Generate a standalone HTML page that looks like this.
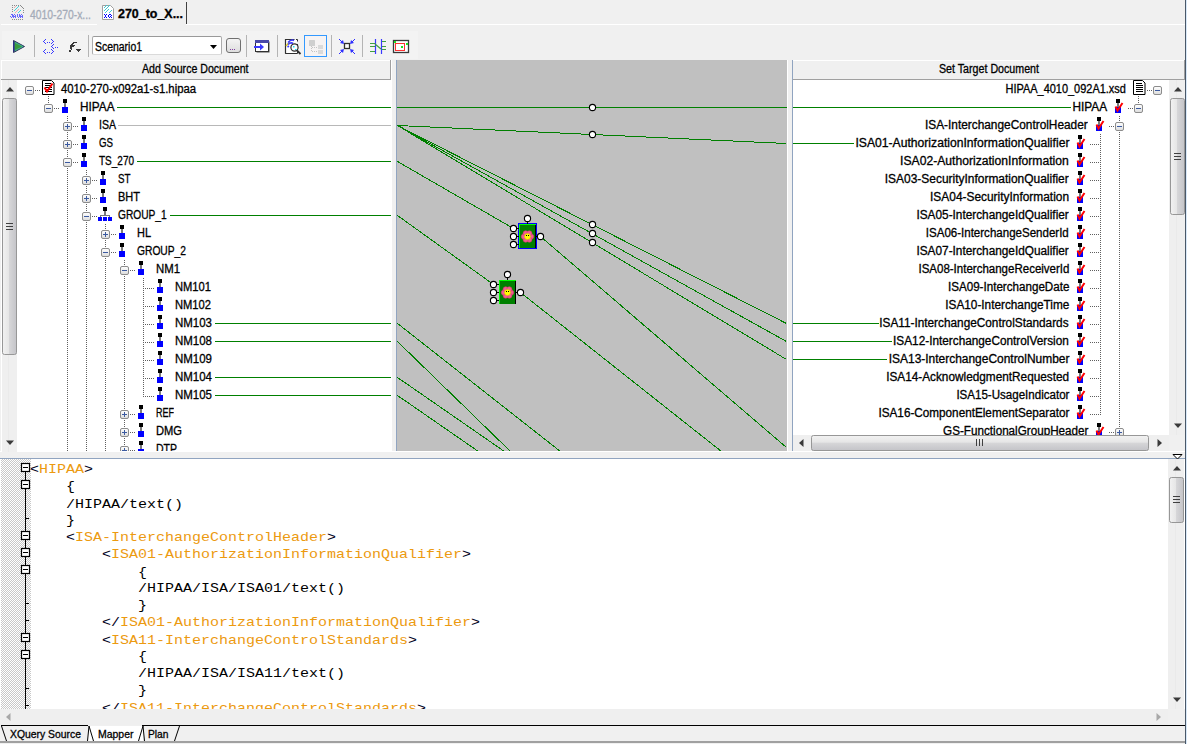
<!DOCTYPE html><html><head><meta charset="utf-8"><style>html,body{margin:0;padding:0}body{width:1187px;height:744px;overflow:hidden;position:relative;background:#f0f0f0}</style></head><body>
<div style="position:absolute;left:1px;top:24px;width:96px;height:1px;background:#ffffff;"></div>
<div style="position:absolute;left:186px;top:24px;width:999px;height:1px;background:#ffffff;"></div>
<div style="position:absolute;left:186px;top:2px;width:1px;height:22px;background:#404040;"></div>
<div style="position:absolute;left:2px;top:31px;width:416px;height:28px;background:#f3f3f3;"></div>
<div style="position:absolute;left:1185px;top:0px;width:1px;height:744px;background:#4a5868;"></div>
<div style="position:absolute;left:1186px;top:0px;width:1px;height:744px;background:#d8e8f8;"></div>
<div style="position:absolute;left:1px;top:60px;width:391px;height:392px;background:#ffffff;"></div>
<div style="position:absolute;left:2px;top:61px;width:388px;height:18px;background:#f0f0f0;"></div>
<div style="position:absolute;left:1px;top:79px;width:390px;height:1px;background:#a0a0a0;"></div>
<div style="position:absolute;left:390px;top:60px;width:1px;height:20px;background:#a0a0a0;"></div>
<div style="position:absolute;left:396px;top:60px;width:1px;height:391px;background:#90a4c0;"></div>
<div style="position:absolute;left:397px;top:60px;width:390px;height:391px;background:#c0c0c0;"></div>
<div style="position:absolute;left:787px;top:60px;width:1px;height:391px;background:#ffffff;"></div>
<div style="position:absolute;left:792px;top:60px;width:1px;height:391px;background:#90a4c0;"></div>
<div style="position:absolute;left:793px;top:60px;width:392px;height:392px;background:#ffffff;"></div>
<div style="position:absolute;left:793px;top:61px;width:391px;height:18px;background:#f0f0f0;"></div>
<div style="position:absolute;left:793px;top:79px;width:391px;height:1px;background:#a0a0a0;"></div>
<div style="position:absolute;left:1184px;top:60px;width:1px;height:20px;background:#a0a0a0;"></div>
<div style="position:absolute;left:0px;top:458px;width:1185px;height:1px;background:#90a4c0;"></div>
<div style="position:absolute;left:0px;top:459px;width:1185px;height:250px;background:#ffffff;"></div>
<div style="position:absolute;left:1px;top:459px;width:30px;height:250px;background:repeating-conic-gradient(#c8c8c8 0% 25%, #ffffff 0% 50%) 0 0/2px 2px;"></div>
<div style="position:absolute;left:0px;top:741px;width:1185px;height:2px;background:#a0a0a0;"></div>
<div style="position:absolute;left:34px;top:35px;width:1px;height:22px;background:#b4b4b4;"></div>
<div style="position:absolute;left:88px;top:35px;width:1px;height:22px;background:#b4b4b4;"></div>
<div style="position:absolute;left:246px;top:35px;width:1px;height:22px;background:#b4b4b4;"></div>
<div style="position:absolute;left:277px;top:35px;width:1px;height:22px;background:#b4b4b4;"></div>
<div style="position:absolute;left:331px;top:35px;width:1px;height:22px;background:#b4b4b4;"></div>
<div style="position:absolute;left:362px;top:35px;width:1px;height:22px;background:#b4b4b4;"></div>
<div style="position:absolute;left:92px;top:36px;width:130px;height:19px;background:#ffffff;box-sizing:border-box;border:1px solid #acacac;border-top-color:#9a9a9a;border-bottom-color:#dadada;border-radius:2px;"></div>
<div style="position:absolute;left:226px;top:38px;width:15px;height:15px;background:linear-gradient(#f4f4f4,#dedede);box-sizing:border-box;border:1px solid #707070;border-radius:3px;"></div>
<div style="position:absolute;left:304px;top:35px;width:23px;height:22px;background:#f6f3f3;box-sizing:border-box;border:1px solid #3399ff;"></div>
<div style="position:absolute;left:88px;top:726px;width:55px;height:15px;background:#ffffff;"></div>
<div style="position:absolute;top:6px;font-family:'Liberation Sans', sans-serif;font-size:12px;line-height:18px;color:#a4abb8;font-weight:normal;white-space:pre;-webkit-text-stroke:0.3px #a4abb8;left:30px;transform-origin:0 0;transform:scaleX(0.8626);">4010-270-x...</div>
<div style="position:absolute;top:5px;font-family:'Liberation Sans', sans-serif;font-size:12px;line-height:18px;color:#000;font-weight:bold;white-space:pre;-webkit-text-stroke:0.3px #000;left:118px;transform-origin:0 0;transform:scaleX(1.0366);">270_to_X...</div>
<div style="position:absolute;top:38px;font-family:'Liberation Sans', sans-serif;font-size:12px;line-height:18px;color:#000;font-weight:normal;white-space:pre;-webkit-text-stroke:0.3px #000;left:95px;transform-origin:0 0;transform:scaleX(0.8696);">Scenario1</div>
<div style="position:absolute;top:60px;font-family:'Liberation Sans', sans-serif;font-size:12px;line-height:18px;color:#000;font-weight:normal;white-space:pre;-webkit-text-stroke:0.3px #000;left:142px;transform-origin:0 0;transform:scaleX(0.8821);">Add Source Document</div>
<div style="position:absolute;top:60px;font-family:'Liberation Sans', sans-serif;font-size:12px;line-height:18px;color:#000;font-weight:normal;white-space:pre;-webkit-text-stroke:0.3px #000;left:938.5px;transform-origin:0 0;transform:scaleX(0.8888);">Set Target Document</div>
<div style="position:absolute;top:80px;font-family:'Liberation Sans', sans-serif;font-size:12px;line-height:18px;color:#000;font-weight:normal;white-space:pre;-webkit-text-stroke:0.3px #000;left:61px;transform-origin:0 0;transform:scaleX(0.9411);">4010-270-x092a1-s1.hipaa</div>
<div style="position:absolute;top:98px;font-family:'Liberation Sans', sans-serif;font-size:12px;line-height:18px;color:#000;font-weight:normal;white-space:pre;-webkit-text-stroke:0.3px #000;left:80px;transform-origin:0 0;transform:scaleX(0.9822);">HIPAA</div>
<div style="position:absolute;top:116px;font-family:'Liberation Sans', sans-serif;font-size:12px;line-height:18px;color:#000;font-weight:normal;white-space:pre;-webkit-text-stroke:0.3px #000;left:99px;transform-origin:0 0;transform:scaleX(0.8788);">ISA</div>
<div style="position:absolute;top:134px;font-family:'Liberation Sans', sans-serif;font-size:12px;line-height:18px;color:#000;font-weight:normal;white-space:pre;-webkit-text-stroke:0.3px #000;left:99px;transform-origin:0 0;transform:scaleX(0.8072);">GS</div>
<div style="position:absolute;top:152px;font-family:'Liberation Sans', sans-serif;font-size:12px;line-height:18px;color:#000;font-weight:normal;white-space:pre;-webkit-text-stroke:0.3px #000;left:99px;transform-origin:0 0;transform:scaleX(0.8327);">TS_270</div>
<div style="position:absolute;top:170px;font-family:'Liberation Sans', sans-serif;font-size:12px;line-height:18px;color:#000;font-weight:normal;white-space:pre;-webkit-text-stroke:0.3px #000;left:118px;transform-origin:0 0;transform:scaleX(0.8147);">ST</div>
<div style="position:absolute;top:188px;font-family:'Liberation Sans', sans-serif;font-size:12px;line-height:18px;color:#000;font-weight:normal;white-space:pre;-webkit-text-stroke:0.3px #000;left:118px;transform-origin:0 0;transform:scaleX(0.9167);">BHT</div>
<div style="position:absolute;top:206px;font-family:'Liberation Sans', sans-serif;font-size:12px;line-height:18px;color:#000;font-weight:normal;white-space:pre;-webkit-text-stroke:0.3px #000;left:118px;transform-origin:0 0;transform:scaleX(0.8490);">GROUP_1</div>
<div style="position:absolute;top:224px;font-family:'Liberation Sans', sans-serif;font-size:12px;line-height:18px;color:#000;font-weight:normal;white-space:pre;-webkit-text-stroke:0.3px #000;left:137px;transform-origin:0 0;transform:scaleX(0.9124);">HL</div>
<div style="position:absolute;top:242px;font-family:'Liberation Sans', sans-serif;font-size:12px;line-height:18px;color:#000;font-weight:normal;white-space:pre;-webkit-text-stroke:0.3px #000;left:137px;transform-origin:0 0;transform:scaleX(0.8543);">GROUP_2</div>
<div style="position:absolute;top:260px;font-family:'Liberation Sans', sans-serif;font-size:12px;line-height:18px;color:#000;font-weight:normal;white-space:pre;-webkit-text-stroke:0.3px #000;left:156px;transform-origin:0 0;transform:scaleX(0.9470);">NM1</div>
<div style="position:absolute;top:278px;font-family:'Liberation Sans', sans-serif;font-size:12px;line-height:18px;color:#000;font-weight:normal;white-space:pre;-webkit-text-stroke:0.3px #000;left:175px;transform-origin:0 0;transform:scaleX(0.9305);">NM101</div>
<div style="position:absolute;top:296px;font-family:'Liberation Sans', sans-serif;font-size:12px;line-height:18px;color:#000;font-weight:normal;white-space:pre;-webkit-text-stroke:0.3px #000;left:175px;transform-origin:0 0;transform:scaleX(0.9305);">NM102</div>
<div style="position:absolute;top:314px;font-family:'Liberation Sans', sans-serif;font-size:12px;line-height:18px;color:#000;font-weight:normal;white-space:pre;-webkit-text-stroke:0.3px #000;left:175px;transform-origin:0 0;transform:scaleX(0.9564);">NM103</div>
<div style="position:absolute;top:332px;font-family:'Liberation Sans', sans-serif;font-size:12px;line-height:18px;color:#000;font-weight:normal;white-space:pre;-webkit-text-stroke:0.3px #000;left:175px;transform-origin:0 0;transform:scaleX(0.9564);">NM108</div>
<div style="position:absolute;top:350px;font-family:'Liberation Sans', sans-serif;font-size:12px;line-height:18px;color:#000;font-weight:normal;white-space:pre;-webkit-text-stroke:0.3px #000;left:175px;transform-origin:0 0;transform:scaleX(0.9564);">NM109</div>
<div style="position:absolute;top:368px;font-family:'Liberation Sans', sans-serif;font-size:12px;line-height:18px;color:#000;font-weight:normal;white-space:pre;-webkit-text-stroke:0.3px #000;left:175px;transform-origin:0 0;transform:scaleX(0.9564);">NM104</div>
<div style="position:absolute;top:386px;font-family:'Liberation Sans', sans-serif;font-size:12px;line-height:18px;color:#000;font-weight:normal;white-space:pre;-webkit-text-stroke:0.3px #000;left:175px;transform-origin:0 0;transform:scaleX(0.9564);">NM105</div>
<div style="position:absolute;top:404px;font-family:'Liberation Sans', sans-serif;font-size:12px;line-height:18px;color:#000;font-weight:normal;white-space:pre;-webkit-text-stroke:0.3px #000;left:156px;transform-origin:0 0;transform:scaleX(0.7500);">REF</div>
<div style="position:absolute;top:422px;font-family:'Liberation Sans', sans-serif;font-size:12px;line-height:18px;color:#000;font-weight:normal;white-space:pre;-webkit-text-stroke:0.3px #000;left:156px;transform-origin:0 0;transform:scaleX(0.9286);">DMG</div>
<div style="position:absolute;top:440px;font-family:'Liberation Sans', sans-serif;font-size:12px;line-height:18px;color:#000;font-weight:normal;white-space:pre;-webkit-text-stroke:0.3px #000;left:156px;transform-origin:0 0;transform:scaleX(0.8750);">DTP</div>
<div style="position:absolute;top:80px;font-family:'Liberation Sans', sans-serif;font-size:12px;line-height:18px;color:#000;font-weight:normal;white-space:pre;-webkit-text-stroke:0.3px #000;right:61px;transform-origin:100% 0;transform:scaleX(0.9130);">HIPAA_4010_092A1.xsd</div>
<div style="position:absolute;top:98px;font-family:'Liberation Sans', sans-serif;font-size:12px;line-height:18px;color:#000;font-weight:normal;white-space:pre;-webkit-text-stroke:0.3px #000;right:80px;transform-origin:100% 0;transform:scaleX(0.9851);">HIPAA</div>
<div style="position:absolute;top:116px;font-family:'Liberation Sans', sans-serif;font-size:12px;line-height:18px;color:#000;font-weight:normal;white-space:pre;-webkit-text-stroke:0.3px #000;right:99px;transform-origin:100% 0;transform:scaleX(0.9881);">ISA-InterchangeControlHeader</div>
<div style="position:absolute;top:134px;font-family:'Liberation Sans', sans-serif;font-size:12px;line-height:18px;color:#000;font-weight:normal;white-space:pre;-webkit-text-stroke:0.3px #000;right:118px;transform-origin:100% 0;transform:scaleX(1.0120);">ISA01-AuthorizationInformationQualifier</div>
<div style="position:absolute;top:152px;font-family:'Liberation Sans', sans-serif;font-size:12px;line-height:18px;color:#000;font-weight:normal;white-space:pre;-webkit-text-stroke:0.3px #000;right:118px;transform-origin:100% 0;transform:scaleX(1.0116);">ISA02-AuthorizationInformation</div>
<div style="position:absolute;top:170px;font-family:'Liberation Sans', sans-serif;font-size:12px;line-height:18px;color:#000;font-weight:normal;white-space:pre;-webkit-text-stroke:0.3px #000;right:118px;transform-origin:100% 0;transform:scaleX(0.9959);">ISA03-SecurityInformationQualifier</div>
<div style="position:absolute;top:188px;font-family:'Liberation Sans', sans-serif;font-size:12px;line-height:18px;color:#000;font-weight:normal;white-space:pre;-webkit-text-stroke:0.3px #000;right:118px;transform-origin:100% 0;transform:scaleX(0.9924);">ISA04-SecurityInformation</div>
<div style="position:absolute;top:206px;font-family:'Liberation Sans', sans-serif;font-size:12px;line-height:18px;color:#000;font-weight:normal;white-space:pre;-webkit-text-stroke:0.3px #000;right:118px;transform-origin:100% 0;transform:scaleX(0.9841);">ISA05-InterchangeIdQualifier</div>
<div style="position:absolute;top:224px;font-family:'Liberation Sans', sans-serif;font-size:12px;line-height:18px;color:#000;font-weight:normal;white-space:pre;-webkit-text-stroke:0.3px #000;right:118px;transform-origin:100% 0;transform:scaleX(0.9611);">ISA06-InterchangeSenderId</div>
<div style="position:absolute;top:242px;font-family:'Liberation Sans', sans-serif;font-size:12px;line-height:18px;color:#000;font-weight:normal;white-space:pre;-webkit-text-stroke:0.3px #000;right:118px;transform-origin:100% 0;transform:scaleX(0.9841);">ISA07-InterchangeIdQualifier</div>
<div style="position:absolute;top:260px;font-family:'Liberation Sans', sans-serif;font-size:12px;line-height:18px;color:#000;font-weight:normal;white-space:pre;-webkit-text-stroke:0.3px #000;right:118px;transform-origin:100% 0;transform:scaleX(0.9591);">ISA08-InterchangeReceiverId</div>
<div style="position:absolute;top:278px;font-family:'Liberation Sans', sans-serif;font-size:12px;line-height:18px;color:#000;font-weight:normal;white-space:pre;-webkit-text-stroke:0.3px #000;right:118px;transform-origin:100% 0;transform:scaleX(0.9687);">ISA09-InterchangeDate</div>
<div style="position:absolute;top:296px;font-family:'Liberation Sans', sans-serif;font-size:12px;line-height:18px;color:#000;font-weight:normal;white-space:pre;-webkit-text-stroke:0.3px #000;right:118px;transform-origin:100% 0;transform:scaleX(0.9818);">ISA10-InterchangeTime</div>
<div style="position:absolute;top:314px;font-family:'Liberation Sans', sans-serif;font-size:12px;line-height:18px;color:#000;font-weight:normal;white-space:pre;-webkit-text-stroke:0.3px #000;right:118px;transform-origin:100% 0;transform:scaleX(0.9831);">ISA11-InterchangeControlStandards</div>
<div style="position:absolute;top:332px;font-family:'Liberation Sans', sans-serif;font-size:12px;line-height:18px;color:#000;font-weight:normal;white-space:pre;-webkit-text-stroke:0.3px #000;right:118px;transform-origin:100% 0;transform:scaleX(0.9828);">ISA12-InterchangeControlVersion</div>
<div style="position:absolute;top:350px;font-family:'Liberation Sans', sans-serif;font-size:12px;line-height:18px;color:#000;font-weight:normal;white-space:pre;-webkit-text-stroke:0.3px #000;right:118px;transform-origin:100% 0;transform:scaleX(0.9959);">ISA13-InterchangeControlNumber</div>
<div style="position:absolute;top:368px;font-family:'Liberation Sans', sans-serif;font-size:12px;line-height:18px;color:#000;font-weight:normal;white-space:pre;-webkit-text-stroke:0.3px #000;right:118px;transform-origin:100% 0;transform:scaleX(0.9832);">ISA14-AcknowledgmentRequested</div>
<div style="position:absolute;top:386px;font-family:'Liberation Sans', sans-serif;font-size:12px;line-height:18px;color:#000;font-weight:normal;white-space:pre;-webkit-text-stroke:0.3px #000;right:118px;transform-origin:100% 0;transform:scaleX(0.9625);">ISA15-UsageIndicator</div>
<div style="position:absolute;top:404px;font-family:'Liberation Sans', sans-serif;font-size:12px;line-height:18px;color:#000;font-weight:normal;white-space:pre;-webkit-text-stroke:0.3px #000;right:118px;transform-origin:100% 0;transform:scaleX(0.9772);">ISA16-ComponentElementSeparator</div>
<div style="position:absolute;top:422px;font-family:'Liberation Sans', sans-serif;font-size:12px;line-height:18px;color:#000;font-weight:normal;white-space:pre;-webkit-text-stroke:0.3px #000;right:99px;transform-origin:100% 0;transform:scaleX(0.9724);">GS-FunctionalGroupHeader</div>
<div style="position:absolute;left:30px;top:461.5px;width:1137px;height:309px;overflow:hidden;font-family:'Liberation Mono',monospace;font-size:15px;line-height:21.25px;transform:scaleY(0.8);transform-origin:0 0;white-space:pre;color:#000;"><span style="color:#000020">&lt;</span><span style="color:#ec9a10">HIPAA</span><span style="color:#000020">&gt;</span>
    <span style="color:#000">{</span>
    <span style="color:#000">/HIPAA/text()</span>
    <span style="color:#000">}</span>
    <span style="color:#000020">&lt;</span><span style="color:#ec9a10">ISA-InterchangeControlHeader</span><span style="color:#000020">&gt;</span>
        <span style="color:#000020">&lt;</span><span style="color:#ec9a10">ISA01-AuthorizationInformationQualifier</span><span style="color:#000020">&gt;</span>
            <span style="color:#000">{</span>
            <span style="color:#000">/HIPAA/ISA/ISA01/text()</span>
            <span style="color:#000">}</span>
        <span style="color:#000020">&lt;/</span><span style="color:#ec9a10">ISA01-AuthorizationInformationQualifier</span><span style="color:#000020">&gt;</span>
        <span style="color:#000020">&lt;</span><span style="color:#ec9a10">ISA11-InterchangeControlStandards</span><span style="color:#000020">&gt;</span>
            <span style="color:#000">{</span>
            <span style="color:#000">/HIPAA/ISA/ISA11/text()</span>
            <span style="color:#000">}</span>
        <span style="color:#000020">&lt;/</span><span style="color:#ec9a10">ISA11-InterchangeControlStandards</span><span style="color:#000020">&gt;</span></div>
<div style="position:absolute;top:726px;font-family:'Liberation Sans', sans-serif;font-size:11px;line-height:16px;color:#000;font-weight:normal;white-space:pre;-webkit-text-stroke:0.3px #000;left:10px;transform-origin:0 0;transform:scaleX(0.9441);">XQuery Source</div>
<div style="position:absolute;top:726px;font-family:'Liberation Sans', sans-serif;font-size:11px;line-height:16px;color:#000;font-weight:normal;white-space:pre;-webkit-text-stroke:0.3px #000;left:97.5px;transform-origin:0 0;transform:scaleX(0.9518);">Mapper</div>
<div style="position:absolute;top:726px;font-family:'Liberation Sans', sans-serif;font-size:11px;line-height:16px;color:#000;font-weight:normal;white-space:pre;-webkit-text-stroke:0.3px #000;left:148px;transform-origin:0 0;transform:scaleX(0.9305);">Plan</div>
<svg width="1187" height="744" style="position:absolute;left:0;top:0">
<defs><linearGradient id="boxg" x1="0" y1="0" x2="0" y2="1"><stop offset="0" stop-color="#ffffff"/><stop offset="1" stop-color="#dcdcdc"/></linearGradient><linearGradient id="thumbv" x1="0" y1="0" x2="1" y2="0"><stop offset="0" stop-color="#f2f2f2"/><stop offset="0.45" stop-color="#e6e6e6"/><stop offset="0.5" stop-color="#d6d6d8"/><stop offset="1" stop-color="#c4c4c8"/></linearGradient><linearGradient id="thumbh" x1="0" y1="0" x2="0" y2="1"><stop offset="0" stop-color="#f2f2f2"/><stop offset="0.45" stop-color="#e6e6e6"/><stop offset="0.5" stop-color="#d6d6d8"/><stop offset="1" stop-color="#c4c4c8"/></linearGradient></defs>
<path d="M12 5h1v1h-1zM14 5h1v1h-1zM16 5h1v1h-1zM18 5h1v1h-1zM20 5h1v1h-1zM12 7h1v1h-1zM12 9h1v1h-1zM12 11h1v1h-1zM21 6h1v1h-1zM22 7h1v1h-1zM23 8h1v1h-1zM23 10h1v1h-1zM23 12h1v1h-1zM12 19h1v1h-1zM14 19h1v1h-1zM16 19h1v1h-1zM18 19h1v1h-1zM20 19h1v1h-1zM22 19h1v1h-1z" fill="#707070" opacity="0.8"/>
<path d="M14 10h1v1h-1zM15 9h1v1h-1zM16 8h1v1h-1zM17 7h1v1h-1zM18 6h1v1h-1zM18 12h1v1h-1zM19 11h1v1h-1zM20 10h1v1h-1z" fill="#30d0d8" opacity="0.9"/>
<path d="M14 7h1v1h-1zM15 6h1v1h-1zM15 12h1v1h-1zM16 11h1v1h-1zM17 10h1v1h-1zM18 9h1v1h-1z" fill="#e8a8a8" opacity="0.9"/>
<path d="M11 14h1v1h-1zM12 14h1v1h-1zM12 15h1v1h-1zM12 16h1v1h-1zM11 17h1v1h-1zM10 16h1v1h-1zM14 14h1v1h-1zM13 15h1v1h-1zM15 15h1v1h-1zM13 16h1v1h-1zM14 16h1v1h-1zM15 16h1v1h-1zM13 17h1v1h-1zM15 17h1v1h-1zM17 14h1v1h-1zM19 14h1v1h-1zM17 15h1v1h-1zM19 15h1v1h-1zM17 16h1v1h-1zM19 16h1v1h-1zM18 17h1v1h-1zM21 14h1v1h-1zM20 15h1v1h-1zM22 15h1v1h-1zM20 16h1v1h-1zM21 16h1v1h-1zM22 16h1v1h-1zM20 17h1v1h-1zM22 17h1v1h-1z" fill="#5050ff" opacity="0.85"/>
<path d="M102.5 5.5h8l3 3v11h-11z" fill="#fff" stroke="#a0a0a0"/>
<path d="M104 7h1v1h-1zM105 6h1v1h-1zM106 5h1v1h-1zM104 10h1v1h-1zM105 9h1v1h-1zM106 8h1v1h-1zM107 7h1v1h-1zM108 6h1v1h-1zM109 5h1v1h-1zM105 12h1v1h-1zM106 11h1v1h-1zM107 10h1v1h-1zM108 9h1v1h-1zM109 12h1v1h-1zM110 11h1v1h-1zM111 10h1v1h-1z" fill="#40c8d0" opacity="1"/>
<path d="M104 14h1v1h-1zM106 14h1v1h-1zM105 15h1v1h-1zM105 16h1v1h-1zM104 17h1v1h-1zM106 17h1v1h-1zM109 14h1v1h-1zM110 14h1v1h-1zM108 15h1v1h-1zM111 15h1v1h-1zM108 16h1v1h-1zM110 16h1v1h-1zM109 17h1v1h-1zM111 17h1v1h-1z" fill="#0000ff" opacity="1"/>
<path d="M13.5 40.5 L24.5 46.5 L13.5 52.5 Z" fill="#3c9c3c" stroke="#303060" stroke-width="1"/><path d="M14 41.5 L14 51.5" stroke="#3030a0" stroke-width="1.2"/><path d="M15 42.5L23 46.5L15 50.5" fill="none" stroke="#40b8b0" stroke-width="0.8"/>
<path d="M45 39h1v1h-1zM43 41h1v1h-1zM45 43h1v1h-1zM47 42h1v1h-1zM49 42h1v1h-1zM51 39h1v1h-1zM53 41h1v1h-1zM51 43h1v1h-1zM53 44h1v1h-1zM51 46h1v1h-1zM53 48h1v1h-1zM55 47h1v1h-1zM57 47h1v1h-1zM45 49h1v1h-1zM43 51h1v1h-1zM45 53h1v1h-1zM47 52h1v1h-1zM49 52h1v1h-1zM51 49h1v1h-1zM53 51h1v1h-1zM51 53h1v1h-1zM44 40h1v1h-1zM44 42h1v1h-1zM52 40h1v1h-1zM52 42h1v1h-1zM52 45h1v1h-1zM52 47h1v1h-1zM44 50h1v1h-1zM44 52h1v1h-1zM52 50h1v1h-1zM52 52h1v1h-1z" fill="#3a3aff"/>
<path d="M69 50h1v1h-1zM70 50h1v1h-1zM69 51h1v1h-1zM70 51h1v1h-1zM70 45h1v1h-1zM71 45h1v1h-1zM70 46h1v1h-1zM71 46h1v1h-1zM70 47h1v1h-1zM71 47h1v1h-1zM70 48h1v1h-1zM71 48h1v1h-1zM71 49h1v1h-1zM71 44h1v1h-1zM72 44h1v1h-1zM72 43h1v1h-1zM73 43h1v1h-1zM74 42h1v1h-1zM75 42h1v1h-1zM76 42h1v1h-1zM73 42h1v1h-1zM72 45h1v1h-1zM73 45h1v1h-1zM74 45h1v1h-1zM72 46h1v1h-1zM73 46h1v1h-1zM76 49h1v1h-1zM77 49h1v1h-1zM78 49h1v1h-1zM79 49h1v1h-1zM80 49h1v1h-1zM77 50h1v1h-1zM78 50h1v1h-1zM79 50h1v1h-1zM78 51h1v1h-1z" fill="#3a3a3a" opacity="1"/>
<path d="M210 45h7l-3.5 4z" fill="#000"/>
<path d="M230 49h1v1h-1zM232 49h1v1h-1zM234 49h1v1h-1z" fill="#8040a0"/>
<rect x="256.5" y="41.5" width="13" height="11" fill="#505050"/><rect x="255.5" y="40.5" width="13" height="11" fill="#fff" stroke="#303030"/><rect x="255" y="40" width="14" height="3" fill="#4848a8"/><rect x="254" y="46" width="7" height="2" fill="#3a3aff"/><path d="M260 43.5l4 3.5l-4 3.5z" fill="#3a3aff"/>
<path d="M285.5 53.5v-14h9M297.5 44v9.5h-12" fill="#fff" stroke="#303030" stroke-width="1"/><rect x="286" y="40" width="11" height="13" fill="#fff"/><path d="M285.5 53.5v-14h2M285.5 53.5h11" fill="none" stroke="#303030" stroke-width="1.2"/><path d="M296 39.5h1.5v2" fill="none" stroke="#303030"/><path d="M286 46 L290 41.5" stroke="#d8c820" stroke-width="1.4"/><path d="M288 42.5 Q291 39 294 40.5 M288 44.5 Q291 42 293 43.5 M287.5 47 L289 46" fill="none" stroke="#3a3aff" stroke-width="1.6"/><circle cx="294.5" cy="47.5" r="3.6" fill="#fff" stroke="#303030" stroke-width="1.2"/><rect x="293" y="46" width="1.5" height="1.5" fill="#20e0f0"/><rect x="295" y="49" width="1.5" height="1" fill="#20e0f0"/><path d="M297 50.5 L300.5 54" stroke="#303030" stroke-width="1.8"/>
<rect x="309" y="40" width="6" height="6" rx="0.5" fill="#cfcfcf"/><path d="M311.5 46v6" stroke="#c4c4c4" stroke-dasharray="1 1"/><path d="M312 47.5h6M312 51.5h6" stroke="#c4c4c4" stroke-dasharray="1 1"/><rect x="318" y="45" width="5" height="4" fill="#dadada"/><rect x="318" y="50" width="5" height="4" fill="#dadada"/>
<rect x="344.5" y="43.5" width="5" height="5" fill="#fff" stroke="#303030" stroke-width="1.3"/><path d="M339 39L342 42M355 39L352 42M339 54L342 51M355 54L352 51" stroke="#3030ff" stroke-width="1"/><path d="M344 44l-4 -1l3 -3zM350 44l4 -1l-3 -3zM344 49l-4 1l3 3zM350 49l4 1l-3 3z" fill="#3030ff"/>
<path d="M375.5 39v15M381.5 39v15" stroke="#3a3aff" stroke-width="1.2"/><path d="M370 43.5h5M370 46.5h5M370 51.5h5M382 41.5h4M382 46.5h4M382 49.5h4M375 44L381 49" stroke="#40a040" stroke-width="1.2"/>
<rect x="393.5" y="40.5" width="15" height="12" fill="#fff" stroke="#383838" stroke-width="1.3"/><rect x="395.5" y="43.5" width="9" height="7" fill="none" stroke="#ff3030"/><rect x="394" y="41" width="2" height="2" fill="#20e020"/><rect x="406" y="43" width="2" height="2" fill="#20e020"/><rect x="401" y="46" width="2" height="2" fill="#20e020"/>
<path d="M48 96h1v1h-1zM48 98h1v1h-1zM48 100h1v1h-1zM48 102h1v1h-1z" fill="#5f5f5f"/>
<path d="M67 116h1v1h-1zM67 118h1v1h-1zM67 120h1v1h-1zM67 122h1v1h-1zM67 124h1v1h-1zM67 126h1v1h-1zM67 128h1v1h-1zM67 130h1v1h-1zM67 132h1v1h-1zM67 134h1v1h-1zM67 136h1v1h-1zM67 138h1v1h-1zM67 140h1v1h-1zM67 142h1v1h-1zM67 144h1v1h-1zM67 146h1v1h-1zM67 148h1v1h-1zM67 150h1v1h-1zM67 152h1v1h-1zM67 154h1v1h-1zM67 156h1v1h-1zM67 158h1v1h-1zM67 160h1v1h-1zM67 162h1v1h-1zM67 164h1v1h-1zM67 166h1v1h-1zM67 168h1v1h-1zM67 170h1v1h-1zM67 172h1v1h-1zM67 174h1v1h-1zM67 176h1v1h-1zM67 178h1v1h-1zM67 180h1v1h-1zM67 182h1v1h-1zM67 184h1v1h-1zM67 186h1v1h-1zM67 188h1v1h-1zM67 190h1v1h-1zM67 192h1v1h-1zM67 194h1v1h-1zM67 196h1v1h-1zM67 198h1v1h-1zM67 200h1v1h-1zM67 202h1v1h-1zM67 204h1v1h-1zM67 206h1v1h-1zM67 208h1v1h-1zM67 210h1v1h-1zM67 212h1v1h-1zM67 214h1v1h-1zM67 216h1v1h-1zM67 218h1v1h-1zM67 220h1v1h-1zM67 222h1v1h-1zM67 224h1v1h-1zM67 226h1v1h-1zM67 228h1v1h-1zM67 230h1v1h-1zM67 232h1v1h-1zM67 234h1v1h-1zM67 236h1v1h-1zM67 238h1v1h-1zM67 240h1v1h-1zM67 242h1v1h-1zM67 244h1v1h-1zM67 246h1v1h-1zM67 248h1v1h-1zM67 250h1v1h-1zM67 252h1v1h-1zM67 254h1v1h-1zM67 256h1v1h-1zM67 258h1v1h-1zM67 260h1v1h-1zM67 262h1v1h-1zM67 264h1v1h-1zM67 266h1v1h-1zM67 268h1v1h-1zM67 270h1v1h-1zM67 272h1v1h-1zM67 274h1v1h-1zM67 276h1v1h-1zM67 278h1v1h-1zM67 280h1v1h-1zM67 282h1v1h-1zM67 284h1v1h-1zM67 286h1v1h-1zM67 288h1v1h-1zM67 290h1v1h-1zM67 292h1v1h-1zM67 294h1v1h-1zM67 296h1v1h-1zM67 298h1v1h-1zM67 300h1v1h-1zM67 302h1v1h-1zM67 304h1v1h-1zM67 306h1v1h-1zM67 308h1v1h-1zM67 310h1v1h-1zM67 312h1v1h-1zM67 314h1v1h-1zM67 316h1v1h-1zM67 318h1v1h-1zM67 320h1v1h-1zM67 322h1v1h-1zM67 324h1v1h-1zM67 326h1v1h-1zM67 328h1v1h-1zM67 330h1v1h-1zM67 332h1v1h-1zM67 334h1v1h-1zM67 336h1v1h-1zM67 338h1v1h-1zM67 340h1v1h-1zM67 342h1v1h-1zM67 344h1v1h-1zM67 346h1v1h-1zM67 348h1v1h-1zM67 350h1v1h-1zM67 352h1v1h-1zM67 354h1v1h-1zM67 356h1v1h-1zM67 358h1v1h-1zM67 360h1v1h-1zM67 362h1v1h-1zM67 364h1v1h-1zM67 366h1v1h-1zM67 368h1v1h-1zM67 370h1v1h-1zM67 372h1v1h-1zM67 374h1v1h-1zM67 376h1v1h-1zM67 378h1v1h-1zM67 380h1v1h-1zM67 382h1v1h-1zM67 384h1v1h-1zM67 386h1v1h-1zM67 388h1v1h-1zM67 390h1v1h-1zM67 392h1v1h-1zM67 394h1v1h-1zM67 396h1v1h-1zM67 398h1v1h-1zM67 400h1v1h-1zM67 402h1v1h-1zM67 404h1v1h-1zM67 406h1v1h-1zM67 408h1v1h-1zM67 410h1v1h-1zM67 412h1v1h-1zM67 414h1v1h-1zM67 416h1v1h-1zM67 418h1v1h-1zM67 420h1v1h-1zM67 422h1v1h-1zM67 424h1v1h-1zM67 426h1v1h-1zM67 428h1v1h-1zM67 430h1v1h-1zM67 432h1v1h-1zM67 434h1v1h-1zM67 436h1v1h-1zM67 438h1v1h-1zM67 440h1v1h-1zM67 442h1v1h-1zM67 444h1v1h-1zM67 446h1v1h-1zM67 448h1v1h-1zM67 450h1v1h-1z" fill="#5f5f5f"/>
<path d="M86 170h1v1h-1zM86 172h1v1h-1zM86 174h1v1h-1zM86 176h1v1h-1zM86 178h1v1h-1zM86 180h1v1h-1zM86 182h1v1h-1zM86 184h1v1h-1zM86 186h1v1h-1zM86 188h1v1h-1zM86 190h1v1h-1zM86 192h1v1h-1zM86 194h1v1h-1zM86 196h1v1h-1zM86 198h1v1h-1zM86 200h1v1h-1zM86 202h1v1h-1zM86 204h1v1h-1zM86 206h1v1h-1zM86 208h1v1h-1zM86 210h1v1h-1zM86 212h1v1h-1zM86 214h1v1h-1zM86 216h1v1h-1zM86 218h1v1h-1zM86 220h1v1h-1zM86 222h1v1h-1zM86 224h1v1h-1zM86 226h1v1h-1zM86 228h1v1h-1zM86 230h1v1h-1zM86 232h1v1h-1zM86 234h1v1h-1zM86 236h1v1h-1zM86 238h1v1h-1zM86 240h1v1h-1zM86 242h1v1h-1zM86 244h1v1h-1zM86 246h1v1h-1zM86 248h1v1h-1zM86 250h1v1h-1zM86 252h1v1h-1zM86 254h1v1h-1zM86 256h1v1h-1zM86 258h1v1h-1zM86 260h1v1h-1zM86 262h1v1h-1zM86 264h1v1h-1zM86 266h1v1h-1zM86 268h1v1h-1zM86 270h1v1h-1zM86 272h1v1h-1zM86 274h1v1h-1zM86 276h1v1h-1zM86 278h1v1h-1zM86 280h1v1h-1zM86 282h1v1h-1zM86 284h1v1h-1zM86 286h1v1h-1zM86 288h1v1h-1zM86 290h1v1h-1zM86 292h1v1h-1zM86 294h1v1h-1zM86 296h1v1h-1zM86 298h1v1h-1zM86 300h1v1h-1zM86 302h1v1h-1zM86 304h1v1h-1zM86 306h1v1h-1zM86 308h1v1h-1zM86 310h1v1h-1zM86 312h1v1h-1zM86 314h1v1h-1zM86 316h1v1h-1zM86 318h1v1h-1zM86 320h1v1h-1zM86 322h1v1h-1zM86 324h1v1h-1zM86 326h1v1h-1zM86 328h1v1h-1zM86 330h1v1h-1zM86 332h1v1h-1zM86 334h1v1h-1zM86 336h1v1h-1zM86 338h1v1h-1zM86 340h1v1h-1zM86 342h1v1h-1zM86 344h1v1h-1zM86 346h1v1h-1zM86 348h1v1h-1zM86 350h1v1h-1zM86 352h1v1h-1zM86 354h1v1h-1zM86 356h1v1h-1zM86 358h1v1h-1zM86 360h1v1h-1zM86 362h1v1h-1zM86 364h1v1h-1zM86 366h1v1h-1zM86 368h1v1h-1zM86 370h1v1h-1zM86 372h1v1h-1zM86 374h1v1h-1zM86 376h1v1h-1zM86 378h1v1h-1zM86 380h1v1h-1zM86 382h1v1h-1zM86 384h1v1h-1zM86 386h1v1h-1zM86 388h1v1h-1zM86 390h1v1h-1zM86 392h1v1h-1zM86 394h1v1h-1zM86 396h1v1h-1zM86 398h1v1h-1zM86 400h1v1h-1zM86 402h1v1h-1zM86 404h1v1h-1zM86 406h1v1h-1zM86 408h1v1h-1zM86 410h1v1h-1zM86 412h1v1h-1zM86 414h1v1h-1zM86 416h1v1h-1zM86 418h1v1h-1zM86 420h1v1h-1zM86 422h1v1h-1zM86 424h1v1h-1zM86 426h1v1h-1zM86 428h1v1h-1zM86 430h1v1h-1zM86 432h1v1h-1zM86 434h1v1h-1zM86 436h1v1h-1zM86 438h1v1h-1zM86 440h1v1h-1zM86 442h1v1h-1zM86 444h1v1h-1zM86 446h1v1h-1zM86 448h1v1h-1zM86 450h1v1h-1z" fill="#5f5f5f"/>
<path d="M105 224h1v1h-1zM105 226h1v1h-1zM105 228h1v1h-1zM105 230h1v1h-1zM105 232h1v1h-1zM105 234h1v1h-1zM105 236h1v1h-1zM105 238h1v1h-1zM105 240h1v1h-1zM105 242h1v1h-1zM105 244h1v1h-1zM105 246h1v1h-1zM105 248h1v1h-1zM105 250h1v1h-1zM105 252h1v1h-1zM105 254h1v1h-1zM105 256h1v1h-1zM105 258h1v1h-1zM105 260h1v1h-1zM105 262h1v1h-1zM105 264h1v1h-1zM105 266h1v1h-1zM105 268h1v1h-1zM105 270h1v1h-1zM105 272h1v1h-1zM105 274h1v1h-1zM105 276h1v1h-1zM105 278h1v1h-1zM105 280h1v1h-1zM105 282h1v1h-1zM105 284h1v1h-1zM105 286h1v1h-1zM105 288h1v1h-1zM105 290h1v1h-1zM105 292h1v1h-1zM105 294h1v1h-1zM105 296h1v1h-1zM105 298h1v1h-1zM105 300h1v1h-1zM105 302h1v1h-1zM105 304h1v1h-1zM105 306h1v1h-1zM105 308h1v1h-1zM105 310h1v1h-1zM105 312h1v1h-1zM105 314h1v1h-1zM105 316h1v1h-1zM105 318h1v1h-1zM105 320h1v1h-1zM105 322h1v1h-1zM105 324h1v1h-1zM105 326h1v1h-1zM105 328h1v1h-1zM105 330h1v1h-1zM105 332h1v1h-1zM105 334h1v1h-1zM105 336h1v1h-1zM105 338h1v1h-1zM105 340h1v1h-1zM105 342h1v1h-1zM105 344h1v1h-1zM105 346h1v1h-1zM105 348h1v1h-1zM105 350h1v1h-1zM105 352h1v1h-1zM105 354h1v1h-1zM105 356h1v1h-1zM105 358h1v1h-1zM105 360h1v1h-1zM105 362h1v1h-1zM105 364h1v1h-1zM105 366h1v1h-1zM105 368h1v1h-1zM105 370h1v1h-1zM105 372h1v1h-1zM105 374h1v1h-1zM105 376h1v1h-1zM105 378h1v1h-1zM105 380h1v1h-1zM105 382h1v1h-1zM105 384h1v1h-1zM105 386h1v1h-1zM105 388h1v1h-1zM105 390h1v1h-1zM105 392h1v1h-1zM105 394h1v1h-1zM105 396h1v1h-1zM105 398h1v1h-1zM105 400h1v1h-1zM105 402h1v1h-1zM105 404h1v1h-1zM105 406h1v1h-1zM105 408h1v1h-1zM105 410h1v1h-1zM105 412h1v1h-1zM105 414h1v1h-1zM105 416h1v1h-1zM105 418h1v1h-1zM105 420h1v1h-1zM105 422h1v1h-1zM105 424h1v1h-1zM105 426h1v1h-1zM105 428h1v1h-1zM105 430h1v1h-1zM105 432h1v1h-1zM105 434h1v1h-1zM105 436h1v1h-1zM105 438h1v1h-1zM105 440h1v1h-1zM105 442h1v1h-1zM105 444h1v1h-1zM105 446h1v1h-1zM105 448h1v1h-1zM105 450h1v1h-1z" fill="#5f5f5f"/>
<path d="M124 260h1v1h-1zM124 262h1v1h-1zM124 264h1v1h-1zM124 266h1v1h-1zM124 268h1v1h-1zM124 270h1v1h-1zM124 272h1v1h-1zM124 274h1v1h-1zM124 276h1v1h-1zM124 278h1v1h-1zM124 280h1v1h-1zM124 282h1v1h-1zM124 284h1v1h-1zM124 286h1v1h-1zM124 288h1v1h-1zM124 290h1v1h-1zM124 292h1v1h-1zM124 294h1v1h-1zM124 296h1v1h-1zM124 298h1v1h-1zM124 300h1v1h-1zM124 302h1v1h-1zM124 304h1v1h-1zM124 306h1v1h-1zM124 308h1v1h-1zM124 310h1v1h-1zM124 312h1v1h-1zM124 314h1v1h-1zM124 316h1v1h-1zM124 318h1v1h-1zM124 320h1v1h-1zM124 322h1v1h-1zM124 324h1v1h-1zM124 326h1v1h-1zM124 328h1v1h-1zM124 330h1v1h-1zM124 332h1v1h-1zM124 334h1v1h-1zM124 336h1v1h-1zM124 338h1v1h-1zM124 340h1v1h-1zM124 342h1v1h-1zM124 344h1v1h-1zM124 346h1v1h-1zM124 348h1v1h-1zM124 350h1v1h-1zM124 352h1v1h-1zM124 354h1v1h-1zM124 356h1v1h-1zM124 358h1v1h-1zM124 360h1v1h-1zM124 362h1v1h-1zM124 364h1v1h-1zM124 366h1v1h-1zM124 368h1v1h-1zM124 370h1v1h-1zM124 372h1v1h-1zM124 374h1v1h-1zM124 376h1v1h-1zM124 378h1v1h-1zM124 380h1v1h-1zM124 382h1v1h-1zM124 384h1v1h-1zM124 386h1v1h-1zM124 388h1v1h-1zM124 390h1v1h-1zM124 392h1v1h-1zM124 394h1v1h-1zM124 396h1v1h-1zM124 398h1v1h-1zM124 400h1v1h-1zM124 402h1v1h-1zM124 404h1v1h-1zM124 406h1v1h-1zM124 408h1v1h-1zM124 410h1v1h-1zM124 412h1v1h-1zM124 414h1v1h-1zM124 416h1v1h-1zM124 418h1v1h-1zM124 420h1v1h-1zM124 422h1v1h-1zM124 424h1v1h-1zM124 426h1v1h-1zM124 428h1v1h-1zM124 430h1v1h-1zM124 432h1v1h-1zM124 434h1v1h-1zM124 436h1v1h-1zM124 438h1v1h-1zM124 440h1v1h-1zM124 442h1v1h-1zM124 444h1v1h-1zM124 446h1v1h-1zM124 448h1v1h-1zM124 450h1v1h-1z" fill="#5f5f5f"/>
<path d="M143 278h1v1h-1zM143 280h1v1h-1zM143 282h1v1h-1zM143 284h1v1h-1zM143 286h1v1h-1zM143 288h1v1h-1zM143 290h1v1h-1zM143 292h1v1h-1zM143 294h1v1h-1zM143 296h1v1h-1zM143 298h1v1h-1zM143 300h1v1h-1zM143 302h1v1h-1zM143 304h1v1h-1zM143 306h1v1h-1zM143 308h1v1h-1zM143 310h1v1h-1zM143 312h1v1h-1zM143 314h1v1h-1zM143 316h1v1h-1zM143 318h1v1h-1zM143 320h1v1h-1zM143 322h1v1h-1zM143 324h1v1h-1zM143 326h1v1h-1zM143 328h1v1h-1zM143 330h1v1h-1zM143 332h1v1h-1zM143 334h1v1h-1zM143 336h1v1h-1zM143 338h1v1h-1zM143 340h1v1h-1zM143 342h1v1h-1zM143 344h1v1h-1zM143 346h1v1h-1zM143 348h1v1h-1zM143 350h1v1h-1zM143 352h1v1h-1zM143 354h1v1h-1zM143 356h1v1h-1zM143 358h1v1h-1zM143 360h1v1h-1zM143 362h1v1h-1zM143 364h1v1h-1zM143 366h1v1h-1zM143 368h1v1h-1zM143 370h1v1h-1zM143 372h1v1h-1zM143 374h1v1h-1zM143 376h1v1h-1zM143 378h1v1h-1zM143 380h1v1h-1zM143 382h1v1h-1zM143 384h1v1h-1zM143 386h1v1h-1zM143 388h1v1h-1zM143 390h1v1h-1zM143 392h1v1h-1zM143 394h1v1h-1zM143 396h1v1h-1z" fill="#5f5f5f"/>
<path d="M35 90h1v1h-1zM37 90h1v1h-1zM39 90h1v1h-1z" fill="#5f5f5f"/>
<rect x="25.5" y="86.5" width="8" height="8" rx="1.5" fill="url(#boxg)" stroke="#8c8c8c"/>
<rect x="27" y="90" width="5" height="1" fill="#3b5aa0"/>
<path d="M54 108h1v1h-1zM56 108h1v1h-1zM58 108h1v1h-1z" fill="#5f5f5f"/>
<rect x="63" y="99" width="4" height="4" fill="#000"/>
<rect x="64" y="103" width="2" height="4" fill="#7a7a7a"/>
<rect x="62" y="107" width="6" height="6" fill="#0000ff"/>
<rect x="44.5" y="104.5" width="8" height="8" rx="1.5" fill="url(#boxg)" stroke="#8c8c8c"/>
<rect x="46" y="108" width="5" height="1" fill="#3b5aa0"/>
<path d="M73 126h1v1h-1zM75 126h1v1h-1zM77 126h1v1h-1z" fill="#5f5f5f"/>
<rect x="82" y="117" width="4" height="4" fill="#000"/>
<rect x="83" y="121" width="2" height="4" fill="#7a7a7a"/>
<rect x="81" y="125" width="6" height="6" fill="#0000ff"/>
<rect x="63.5" y="122.5" width="8" height="8" rx="1.5" fill="url(#boxg)" stroke="#8c8c8c"/>
<rect x="65" y="126" width="5" height="1" fill="#3b5aa0"/>
<rect x="67" y="124" width="1" height="5" fill="#3b5aa0"/>
<path d="M73 144h1v1h-1zM75 144h1v1h-1zM77 144h1v1h-1z" fill="#5f5f5f"/>
<rect x="82" y="135" width="4" height="4" fill="#000"/>
<rect x="83" y="139" width="2" height="4" fill="#7a7a7a"/>
<rect x="81" y="143" width="6" height="6" fill="#0000ff"/>
<rect x="63.5" y="140.5" width="8" height="8" rx="1.5" fill="url(#boxg)" stroke="#8c8c8c"/>
<rect x="65" y="144" width="5" height="1" fill="#3b5aa0"/>
<rect x="67" y="142" width="1" height="5" fill="#3b5aa0"/>
<path d="M73 162h1v1h-1zM75 162h1v1h-1zM77 162h1v1h-1z" fill="#5f5f5f"/>
<rect x="82" y="153" width="4" height="4" fill="#000"/>
<rect x="83" y="157" width="2" height="4" fill="#7a7a7a"/>
<rect x="81" y="161" width="6" height="6" fill="#0000ff"/>
<rect x="63.5" y="158.5" width="8" height="8" rx="1.5" fill="url(#boxg)" stroke="#8c8c8c"/>
<rect x="65" y="162" width="5" height="1" fill="#3b5aa0"/>
<path d="M92 180h1v1h-1zM94 180h1v1h-1zM96 180h1v1h-1z" fill="#5f5f5f"/>
<rect x="101" y="171" width="4" height="4" fill="#000"/>
<rect x="102" y="175" width="2" height="4" fill="#7a7a7a"/>
<rect x="100" y="179" width="6" height="6" fill="#0000ff"/>
<rect x="82.5" y="176.5" width="8" height="8" rx="1.5" fill="url(#boxg)" stroke="#8c8c8c"/>
<rect x="84" y="180" width="5" height="1" fill="#3b5aa0"/>
<rect x="86" y="178" width="1" height="5" fill="#3b5aa0"/>
<path d="M92 198h1v1h-1zM94 198h1v1h-1zM96 198h1v1h-1z" fill="#5f5f5f"/>
<rect x="101" y="189" width="4" height="4" fill="#000"/>
<rect x="102" y="193" width="2" height="4" fill="#7a7a7a"/>
<rect x="100" y="197" width="6" height="6" fill="#0000ff"/>
<rect x="82.5" y="194.5" width="8" height="8" rx="1.5" fill="url(#boxg)" stroke="#8c8c8c"/>
<rect x="84" y="198" width="5" height="1" fill="#3b5aa0"/>
<rect x="86" y="196" width="1" height="5" fill="#3b5aa0"/>
<path d="M92 216h1v1h-1zM94 216h1v1h-1zM96 216h1v1h-1z" fill="#5f5f5f"/>
<rect x="103" y="207" width="4" height="4" fill="#000"/>
<rect x="104" y="211" width="2" height="4" fill="#7a7a7a"/>
<rect x="100" y="215" width="10" height="1" fill="#7a7a7a"/>
<rect x="100" y="215" width="1" height="2" fill="#7a7a7a"/>
<rect x="109" y="215" width="1" height="2" fill="#7a7a7a"/>
<rect x="98" y="217" width="4" height="4" fill="#0000ff"/>
<rect x="103" y="217" width="4" height="4" fill="#0000ff"/>
<rect x="108" y="217" width="4" height="4" fill="#0000ff"/>
<rect x="82.5" y="212.5" width="8" height="8" rx="1.5" fill="url(#boxg)" stroke="#8c8c8c"/>
<rect x="84" y="216" width="5" height="1" fill="#3b5aa0"/>
<path d="M111 234h1v1h-1zM113 234h1v1h-1zM115 234h1v1h-1z" fill="#5f5f5f"/>
<rect x="120" y="225" width="4" height="4" fill="#000"/>
<rect x="121" y="229" width="2" height="4" fill="#7a7a7a"/>
<rect x="119" y="233" width="6" height="6" fill="#0000ff"/>
<rect x="101.5" y="230.5" width="8" height="8" rx="1.5" fill="url(#boxg)" stroke="#8c8c8c"/>
<rect x="103" y="234" width="5" height="1" fill="#3b5aa0"/>
<rect x="105" y="232" width="1" height="5" fill="#3b5aa0"/>
<path d="M111 252h1v1h-1zM113 252h1v1h-1zM115 252h1v1h-1z" fill="#5f5f5f"/>
<rect x="120" y="243" width="4" height="4" fill="#000"/>
<rect x="121" y="247" width="2" height="4" fill="#7a7a7a"/>
<rect x="119" y="251" width="6" height="6" fill="#0000ff"/>
<rect x="101.5" y="248.5" width="8" height="8" rx="1.5" fill="url(#boxg)" stroke="#8c8c8c"/>
<rect x="103" y="252" width="5" height="1" fill="#3b5aa0"/>
<path d="M130 270h1v1h-1zM132 270h1v1h-1zM134 270h1v1h-1z" fill="#5f5f5f"/>
<rect x="139" y="261" width="4" height="4" fill="#000"/>
<rect x="140" y="265" width="2" height="4" fill="#7a7a7a"/>
<rect x="138" y="269" width="6" height="6" fill="#0000ff"/>
<rect x="120.5" y="266.5" width="8" height="8" rx="1.5" fill="url(#boxg)" stroke="#8c8c8c"/>
<rect x="122" y="270" width="5" height="1" fill="#3b5aa0"/>
<path d="M145 288h1v1h-1zM147 288h1v1h-1zM149 288h1v1h-1zM151 288h1v1h-1zM153 288h1v1h-1z" fill="#5f5f5f"/>
<rect x="158" y="279" width="4" height="4" fill="#000"/>
<rect x="159" y="283" width="2" height="4" fill="#7a7a7a"/>
<rect x="157" y="287" width="6" height="6" fill="#0000ff"/>
<path d="M145 306h1v1h-1zM147 306h1v1h-1zM149 306h1v1h-1zM151 306h1v1h-1zM153 306h1v1h-1z" fill="#5f5f5f"/>
<rect x="158" y="297" width="4" height="4" fill="#000"/>
<rect x="159" y="301" width="2" height="4" fill="#7a7a7a"/>
<rect x="157" y="305" width="6" height="6" fill="#0000ff"/>
<path d="M145 324h1v1h-1zM147 324h1v1h-1zM149 324h1v1h-1zM151 324h1v1h-1zM153 324h1v1h-1z" fill="#5f5f5f"/>
<rect x="158" y="315" width="4" height="4" fill="#000"/>
<rect x="159" y="319" width="2" height="4" fill="#7a7a7a"/>
<rect x="157" y="323" width="6" height="6" fill="#0000ff"/>
<path d="M145 342h1v1h-1zM147 342h1v1h-1zM149 342h1v1h-1zM151 342h1v1h-1zM153 342h1v1h-1z" fill="#5f5f5f"/>
<rect x="158" y="333" width="4" height="4" fill="#000"/>
<rect x="159" y="337" width="2" height="4" fill="#7a7a7a"/>
<rect x="157" y="341" width="6" height="6" fill="#0000ff"/>
<path d="M145 360h1v1h-1zM147 360h1v1h-1zM149 360h1v1h-1zM151 360h1v1h-1zM153 360h1v1h-1z" fill="#5f5f5f"/>
<rect x="158" y="351" width="4" height="4" fill="#000"/>
<rect x="159" y="355" width="2" height="4" fill="#7a7a7a"/>
<rect x="157" y="359" width="6" height="6" fill="#0000ff"/>
<path d="M145 378h1v1h-1zM147 378h1v1h-1zM149 378h1v1h-1zM151 378h1v1h-1zM153 378h1v1h-1z" fill="#5f5f5f"/>
<rect x="158" y="369" width="4" height="4" fill="#000"/>
<rect x="159" y="373" width="2" height="4" fill="#7a7a7a"/>
<rect x="157" y="377" width="6" height="6" fill="#0000ff"/>
<path d="M145 396h1v1h-1zM147 396h1v1h-1zM149 396h1v1h-1zM151 396h1v1h-1zM153 396h1v1h-1z" fill="#5f5f5f"/>
<rect x="158" y="387" width="4" height="4" fill="#000"/>
<rect x="159" y="391" width="2" height="4" fill="#7a7a7a"/>
<rect x="157" y="395" width="6" height="6" fill="#0000ff"/>
<path d="M130 414h1v1h-1zM132 414h1v1h-1zM134 414h1v1h-1z" fill="#5f5f5f"/>
<rect x="139" y="405" width="4" height="4" fill="#000"/>
<rect x="140" y="409" width="2" height="4" fill="#7a7a7a"/>
<rect x="138" y="413" width="6" height="6" fill="#0000ff"/>
<rect x="120.5" y="410.5" width="8" height="8" rx="1.5" fill="url(#boxg)" stroke="#8c8c8c"/>
<rect x="122" y="414" width="5" height="1" fill="#3b5aa0"/>
<rect x="124" y="412" width="1" height="5" fill="#3b5aa0"/>
<path d="M130 432h1v1h-1zM132 432h1v1h-1zM134 432h1v1h-1z" fill="#5f5f5f"/>
<rect x="139" y="423" width="4" height="4" fill="#000"/>
<rect x="140" y="427" width="2" height="4" fill="#7a7a7a"/>
<rect x="138" y="431" width="6" height="6" fill="#0000ff"/>
<rect x="120.5" y="428.5" width="8" height="8" rx="1.5" fill="url(#boxg)" stroke="#8c8c8c"/>
<rect x="122" y="432" width="5" height="1" fill="#3b5aa0"/>
<rect x="124" y="430" width="1" height="5" fill="#3b5aa0"/>
<path d="M130 450h1v1h-1zM132 450h1v1h-1zM134 450h1v1h-1z" fill="#5f5f5f"/>
<rect x="139" y="441" width="4" height="4" fill="#000"/>
<rect x="140" y="445" width="2" height="4" fill="#7a7a7a"/>
<rect x="138" y="449" width="6" height="6" fill="#0000ff"/>
<rect x="120.5" y="446.5" width="8" height="8" rx="1.5" fill="url(#boxg)" stroke="#8c8c8c"/>
<rect x="122" y="450" width="5" height="1" fill="#3b5aa0"/>
<rect x="124" y="448" width="1" height="5" fill="#3b5aa0"/>
<path d="M42.5 80.5h9l2.5 2.5v11.5h-11.5z" fill="#fff" stroke="#000"/><path d="M43 94.5h11" stroke="#000" stroke-width="1"/><path d="M45 83.5h6M45 85.5h7M45 87.5h7M45 89.5h7M45 91.5h7" stroke="#000"/><path d="M44.5 87.5 L47 91.5 L52.5 83.5" fill="none" stroke="#ff0000" stroke-width="2"/>
<rect x="117" y="107" width="274" height="1" fill="#008000"/>
<rect x="118" y="125" width="273" height="1" fill="#b8b8b8"/>
<rect x="137" y="161" width="254" height="1" fill="#008000"/>
<rect x="170" y="215" width="221" height="1" fill="#008000"/>
<rect x="215" y="323" width="176" height="1" fill="#008000"/>
<rect x="215" y="341" width="176" height="1" fill="#008000"/>
<rect x="215" y="377" width="176" height="1" fill="#008000"/>
<rect x="215" y="395" width="176" height="1" fill="#008000"/>
<rect x="397" y="107" width="390" height="1" fill="#008000"/>
<line x1="397.5" y1="125.5" x2="786.5" y2="143.5" stroke="#008000" stroke-width="1" shape-rendering="crispEdges"/>
<line x1="397.5" y1="125.5" x2="786.5" y2="323.5" stroke="#008000" stroke-width="1" shape-rendering="crispEdges"/>
<line x1="397.5" y1="125.5" x2="786.5" y2="341.5" stroke="#008000" stroke-width="1" shape-rendering="crispEdges"/>
<line x1="397.5" y1="125.5" x2="786.5" y2="359.5" stroke="#008000" stroke-width="1" shape-rendering="crispEdges"/>
<line x1="397.5" y1="161.5" x2="513.5" y2="228.5" stroke="#008000" stroke-width="1" shape-rendering="crispEdges"/>
<line x1="397.5" y1="215.5" x2="493.5" y2="284.5" stroke="#008000" stroke-width="1" shape-rendering="crispEdges"/>
<line x1="540.5" y1="236.5" x2="786.5" y2="447.5" stroke="#008000" stroke-width="1" shape-rendering="crispEdges"/>
<line x1="520.5" y1="292.5" x2="721.5" y2="451.5" stroke="#008000" stroke-width="1" shape-rendering="crispEdges"/>
<line x1="397.5" y1="323.5" x2="560.5" y2="451.5" stroke="#008000" stroke-width="1" shape-rendering="crispEdges"/>
<line x1="397.5" y1="341.5" x2="510.5" y2="451.5" stroke="#008000" stroke-width="1" shape-rendering="crispEdges"/>
<line x1="397.5" y1="377.5" x2="504.5" y2="451.5" stroke="#008000" stroke-width="1" shape-rendering="crispEdges"/>
<line x1="397.5" y1="395.5" x2="478.5" y2="451.5" stroke="#008000" stroke-width="1" shape-rendering="crispEdges"/>
<circle cx="592.5" cy="107.5" r="3.1" fill="#fff" stroke="#000" stroke-width="1.1"/>
<circle cx="592.5" cy="134.5" r="3.1" fill="#fff" stroke="#000" stroke-width="1.1"/>
<circle cx="592.5" cy="224.5" r="3.1" fill="#fff" stroke="#000" stroke-width="1.1"/>
<circle cx="592.5" cy="233.5" r="3.1" fill="#fff" stroke="#000" stroke-width="1.1"/>
<circle cx="592.5" cy="242.5" r="3.1" fill="#fff" stroke="#000" stroke-width="1.1"/>
<rect x="518" y="223" width="19" height="26" fill="#0000ff"/>
<rect x="519" y="224" width="17" height="24" fill="#008000"/>
<rect x="519" y="224" width="1" height="24" fill="#00ff00"/><rect x="519" y="224" width="17" height="1" fill="#00ff00"/>
<rect x="535" y="225" width="1" height="23" fill="#000"/>
<circle cx="531.10" cy="236.50" r="2.6" fill="#f06090" stroke="#e03070" stroke-width="0.6"/>
<circle cx="529.30" cy="239.62" r="2.6" fill="#f06090" stroke="#e03070" stroke-width="0.6"/>
<circle cx="525.70" cy="239.62" r="2.6" fill="#f06090" stroke="#e03070" stroke-width="0.6"/>
<circle cx="523.90" cy="236.50" r="2.6" fill="#f06090" stroke="#e03070" stroke-width="0.6"/>
<circle cx="525.70" cy="233.38" r="2.6" fill="#f06090" stroke="#e03070" stroke-width="0.6"/>
<circle cx="529.30" cy="233.38" r="2.6" fill="#f06090" stroke="#e03070" stroke-width="0.6"/>
<circle cx="527.5" cy="236.5" r="3" fill="#ffff00" stroke="#d0c000" stroke-width="0.5"/>
<rect x="526" y="235" width="1" height="1" fill="#000"/><rect x="528" y="235" width="1" height="1" fill="#000"/>
<rect x="516" y="228" width="3" height="1" fill="#000"/>
<circle cx="513.5" cy="228.5" r="3.1" fill="#fff" stroke="#000" stroke-width="1.1"/>
<rect x="516" y="236" width="3" height="1" fill="#000"/>
<circle cx="513.5" cy="236.5" r="3.1" fill="#fff" stroke="#000" stroke-width="1.1"/>
<rect x="516" y="244" width="3" height="1" fill="#000"/>
<circle cx="513.5" cy="244.5" r="3.1" fill="#fff" stroke="#000" stroke-width="1.1"/>
<rect x="527" y="221" width="1" height="3" fill="#000"/>
<circle cx="527.5" cy="218.5" r="3.1" fill="#fff" stroke="#000" stroke-width="1.1"/>
<rect x="536" y="236" width="2" height="1" fill="#000"/>
<circle cx="540.5" cy="236.5" r="3.1" fill="#fff" stroke="#000" stroke-width="1.1"/>
<rect x="499" y="280" width="17" height="24" fill="#008000"/>
<rect x="499" y="280" width="1" height="24" fill="#00ff00"/><rect x="499" y="280" width="17" height="1" fill="#00ff00"/>
<rect x="515" y="281" width="1" height="23" fill="#000"/>
<circle cx="511.10" cy="292.50" r="2.6" fill="#f06090" stroke="#e03070" stroke-width="0.6"/>
<circle cx="509.30" cy="295.62" r="2.6" fill="#f06090" stroke="#e03070" stroke-width="0.6"/>
<circle cx="505.70" cy="295.62" r="2.6" fill="#f06090" stroke="#e03070" stroke-width="0.6"/>
<circle cx="503.90" cy="292.50" r="2.6" fill="#f06090" stroke="#e03070" stroke-width="0.6"/>
<circle cx="505.70" cy="289.38" r="2.6" fill="#f06090" stroke="#e03070" stroke-width="0.6"/>
<circle cx="509.30" cy="289.38" r="2.6" fill="#f06090" stroke="#e03070" stroke-width="0.6"/>
<circle cx="507.5" cy="292.5" r="3" fill="#ffff00" stroke="#d0c000" stroke-width="0.5"/>
<rect x="506" y="291" width="1" height="1" fill="#000"/><rect x="508" y="291" width="1" height="1" fill="#000"/>
<rect x="496" y="284" width="3" height="1" fill="#000"/>
<circle cx="493.5" cy="284.5" r="3.1" fill="#fff" stroke="#000" stroke-width="1.1"/>
<rect x="496" y="292" width="3" height="1" fill="#000"/>
<circle cx="493.5" cy="292.5" r="3.1" fill="#fff" stroke="#000" stroke-width="1.1"/>
<rect x="496" y="300" width="3" height="1" fill="#000"/>
<circle cx="493.5" cy="300.5" r="3.1" fill="#fff" stroke="#000" stroke-width="1.1"/>
<rect x="507" y="277" width="1" height="3" fill="#000"/>
<circle cx="507.5" cy="274.5" r="3.1" fill="#fff" stroke="#000" stroke-width="1.1"/>
<rect x="516" y="292" width="2" height="1" fill="#000"/>
<circle cx="520.5" cy="292.5" r="3.1" fill="#fff" stroke="#000" stroke-width="1.1"/>
<path d="M1138 96h1v1h-1zM1138 98h1v1h-1zM1138 100h1v1h-1zM1138 102h1v1h-1z" fill="#5f5f5f"/>
<path d="M1119 116h1v1h-1zM1119 118h1v1h-1zM1119 120h1v1h-1zM1119 122h1v1h-1zM1119 124h1v1h-1zM1119 126h1v1h-1zM1119 128h1v1h-1zM1119 130h1v1h-1zM1119 132h1v1h-1zM1119 134h1v1h-1zM1119 136h1v1h-1zM1119 138h1v1h-1zM1119 140h1v1h-1zM1119 142h1v1h-1zM1119 144h1v1h-1zM1119 146h1v1h-1zM1119 148h1v1h-1zM1119 150h1v1h-1zM1119 152h1v1h-1zM1119 154h1v1h-1zM1119 156h1v1h-1zM1119 158h1v1h-1zM1119 160h1v1h-1zM1119 162h1v1h-1zM1119 164h1v1h-1zM1119 166h1v1h-1zM1119 168h1v1h-1zM1119 170h1v1h-1zM1119 172h1v1h-1zM1119 174h1v1h-1zM1119 176h1v1h-1zM1119 178h1v1h-1zM1119 180h1v1h-1zM1119 182h1v1h-1zM1119 184h1v1h-1zM1119 186h1v1h-1zM1119 188h1v1h-1zM1119 190h1v1h-1zM1119 192h1v1h-1zM1119 194h1v1h-1zM1119 196h1v1h-1zM1119 198h1v1h-1zM1119 200h1v1h-1zM1119 202h1v1h-1zM1119 204h1v1h-1zM1119 206h1v1h-1zM1119 208h1v1h-1zM1119 210h1v1h-1zM1119 212h1v1h-1zM1119 214h1v1h-1zM1119 216h1v1h-1zM1119 218h1v1h-1zM1119 220h1v1h-1zM1119 222h1v1h-1zM1119 224h1v1h-1zM1119 226h1v1h-1zM1119 228h1v1h-1zM1119 230h1v1h-1zM1119 232h1v1h-1zM1119 234h1v1h-1zM1119 236h1v1h-1zM1119 238h1v1h-1zM1119 240h1v1h-1zM1119 242h1v1h-1zM1119 244h1v1h-1zM1119 246h1v1h-1zM1119 248h1v1h-1zM1119 250h1v1h-1zM1119 252h1v1h-1zM1119 254h1v1h-1zM1119 256h1v1h-1zM1119 258h1v1h-1zM1119 260h1v1h-1zM1119 262h1v1h-1zM1119 264h1v1h-1zM1119 266h1v1h-1zM1119 268h1v1h-1zM1119 270h1v1h-1zM1119 272h1v1h-1zM1119 274h1v1h-1zM1119 276h1v1h-1zM1119 278h1v1h-1zM1119 280h1v1h-1zM1119 282h1v1h-1zM1119 284h1v1h-1zM1119 286h1v1h-1zM1119 288h1v1h-1zM1119 290h1v1h-1zM1119 292h1v1h-1zM1119 294h1v1h-1zM1119 296h1v1h-1zM1119 298h1v1h-1zM1119 300h1v1h-1zM1119 302h1v1h-1zM1119 304h1v1h-1zM1119 306h1v1h-1zM1119 308h1v1h-1zM1119 310h1v1h-1zM1119 312h1v1h-1zM1119 314h1v1h-1zM1119 316h1v1h-1zM1119 318h1v1h-1zM1119 320h1v1h-1zM1119 322h1v1h-1zM1119 324h1v1h-1zM1119 326h1v1h-1zM1119 328h1v1h-1zM1119 330h1v1h-1zM1119 332h1v1h-1zM1119 334h1v1h-1zM1119 336h1v1h-1zM1119 338h1v1h-1zM1119 340h1v1h-1zM1119 342h1v1h-1zM1119 344h1v1h-1zM1119 346h1v1h-1zM1119 348h1v1h-1zM1119 350h1v1h-1zM1119 352h1v1h-1zM1119 354h1v1h-1zM1119 356h1v1h-1zM1119 358h1v1h-1zM1119 360h1v1h-1zM1119 362h1v1h-1zM1119 364h1v1h-1zM1119 366h1v1h-1zM1119 368h1v1h-1zM1119 370h1v1h-1zM1119 372h1v1h-1zM1119 374h1v1h-1zM1119 376h1v1h-1zM1119 378h1v1h-1zM1119 380h1v1h-1zM1119 382h1v1h-1zM1119 384h1v1h-1zM1119 386h1v1h-1zM1119 388h1v1h-1zM1119 390h1v1h-1zM1119 392h1v1h-1zM1119 394h1v1h-1zM1119 396h1v1h-1zM1119 398h1v1h-1zM1119 400h1v1h-1zM1119 402h1v1h-1zM1119 404h1v1h-1zM1119 406h1v1h-1zM1119 408h1v1h-1zM1119 410h1v1h-1zM1119 412h1v1h-1zM1119 414h1v1h-1zM1119 416h1v1h-1zM1119 418h1v1h-1zM1119 420h1v1h-1zM1119 422h1v1h-1zM1119 424h1v1h-1zM1119 426h1v1h-1zM1119 428h1v1h-1zM1119 430h1v1h-1zM1119 432h1v1h-1zM1119 434h1v1h-1z" fill="#5f5f5f"/>
<path d="M1100 134h1v1h-1zM1100 136h1v1h-1zM1100 138h1v1h-1zM1100 140h1v1h-1zM1100 142h1v1h-1zM1100 144h1v1h-1zM1100 146h1v1h-1zM1100 148h1v1h-1zM1100 150h1v1h-1zM1100 152h1v1h-1zM1100 154h1v1h-1zM1100 156h1v1h-1zM1100 158h1v1h-1zM1100 160h1v1h-1zM1100 162h1v1h-1zM1100 164h1v1h-1zM1100 166h1v1h-1zM1100 168h1v1h-1zM1100 170h1v1h-1zM1100 172h1v1h-1zM1100 174h1v1h-1zM1100 176h1v1h-1zM1100 178h1v1h-1zM1100 180h1v1h-1zM1100 182h1v1h-1zM1100 184h1v1h-1zM1100 186h1v1h-1zM1100 188h1v1h-1zM1100 190h1v1h-1zM1100 192h1v1h-1zM1100 194h1v1h-1zM1100 196h1v1h-1zM1100 198h1v1h-1zM1100 200h1v1h-1zM1100 202h1v1h-1zM1100 204h1v1h-1zM1100 206h1v1h-1zM1100 208h1v1h-1zM1100 210h1v1h-1zM1100 212h1v1h-1zM1100 214h1v1h-1zM1100 216h1v1h-1zM1100 218h1v1h-1zM1100 220h1v1h-1zM1100 222h1v1h-1zM1100 224h1v1h-1zM1100 226h1v1h-1zM1100 228h1v1h-1zM1100 230h1v1h-1zM1100 232h1v1h-1zM1100 234h1v1h-1zM1100 236h1v1h-1zM1100 238h1v1h-1zM1100 240h1v1h-1zM1100 242h1v1h-1zM1100 244h1v1h-1zM1100 246h1v1h-1zM1100 248h1v1h-1zM1100 250h1v1h-1zM1100 252h1v1h-1zM1100 254h1v1h-1zM1100 256h1v1h-1zM1100 258h1v1h-1zM1100 260h1v1h-1zM1100 262h1v1h-1zM1100 264h1v1h-1zM1100 266h1v1h-1zM1100 268h1v1h-1zM1100 270h1v1h-1zM1100 272h1v1h-1zM1100 274h1v1h-1zM1100 276h1v1h-1zM1100 278h1v1h-1zM1100 280h1v1h-1zM1100 282h1v1h-1zM1100 284h1v1h-1zM1100 286h1v1h-1zM1100 288h1v1h-1zM1100 290h1v1h-1zM1100 292h1v1h-1zM1100 294h1v1h-1zM1100 296h1v1h-1zM1100 298h1v1h-1zM1100 300h1v1h-1zM1100 302h1v1h-1zM1100 304h1v1h-1zM1100 306h1v1h-1zM1100 308h1v1h-1zM1100 310h1v1h-1zM1100 312h1v1h-1zM1100 314h1v1h-1zM1100 316h1v1h-1zM1100 318h1v1h-1zM1100 320h1v1h-1zM1100 322h1v1h-1zM1100 324h1v1h-1zM1100 326h1v1h-1zM1100 328h1v1h-1zM1100 330h1v1h-1zM1100 332h1v1h-1zM1100 334h1v1h-1zM1100 336h1v1h-1zM1100 338h1v1h-1zM1100 340h1v1h-1zM1100 342h1v1h-1zM1100 344h1v1h-1zM1100 346h1v1h-1zM1100 348h1v1h-1zM1100 350h1v1h-1zM1100 352h1v1h-1zM1100 354h1v1h-1zM1100 356h1v1h-1zM1100 358h1v1h-1zM1100 360h1v1h-1zM1100 362h1v1h-1zM1100 364h1v1h-1zM1100 366h1v1h-1zM1100 368h1v1h-1zM1100 370h1v1h-1zM1100 372h1v1h-1zM1100 374h1v1h-1zM1100 376h1v1h-1zM1100 378h1v1h-1zM1100 380h1v1h-1zM1100 382h1v1h-1zM1100 384h1v1h-1zM1100 386h1v1h-1zM1100 388h1v1h-1zM1100 390h1v1h-1zM1100 392h1v1h-1zM1100 394h1v1h-1zM1100 396h1v1h-1zM1100 398h1v1h-1zM1100 400h1v1h-1zM1100 402h1v1h-1zM1100 404h1v1h-1zM1100 406h1v1h-1zM1100 408h1v1h-1zM1100 410h1v1h-1zM1100 412h1v1h-1zM1100 414h1v1h-1z" fill="#5f5f5f"/>
<path d="M1133.5 80.5h9l2.5 2.5v11.5h-11.5z" fill="#fff" stroke="#000"/><path d="M1134 94.5h11" stroke="#000"/><path d="M1136 83.5h6M1136 85.5h7M1136 87.5h7M1136 89.5h7M1136 91.5h7" stroke="#000"/>
<path d="M1147 90h1v1h-1zM1149 90h1v1h-1zM1151 90h1v1h-1z" fill="#5f5f5f"/>
<rect x="1153.5" y="86.5" width="8" height="8" rx="1.5" fill="url(#boxg)" stroke="#8c8c8c"/>
<rect x="1155" y="90" width="5" height="1" fill="#3b5aa0"/>
<rect x="1116" y="99" width="4" height="4" fill="#000"/>
<rect x="1117" y="103" width="2" height="4" fill="#7a7a7a"/>
<rect x="1115" y="107" width="6" height="6" fill="#0000ff"/>
<path d="M1115.5 106.5 L1117.5 110.5 L1122.5 103" fill="none" stroke="#ff0000" stroke-width="2"/>
<path d="M1128 108h1v1h-1zM1130 108h1v1h-1zM1132 108h1v1h-1z" fill="#5f5f5f"/>
<rect x="1134.5" y="104.5" width="8" height="8" rx="1.5" fill="url(#boxg)" stroke="#8c8c8c"/>
<rect x="1136" y="108" width="5" height="1" fill="#3b5aa0"/>
<rect x="1097" y="117" width="4" height="4" fill="#000"/>
<rect x="1098" y="121" width="2" height="4" fill="#7a7a7a"/>
<rect x="1096" y="125" width="6" height="6" fill="#0000ff"/>
<path d="M1096.5 124.5 L1098.5 128.5 L1103.5 121" fill="none" stroke="#ff0000" stroke-width="2"/>
<path d="M1109 126h1v1h-1zM1111 126h1v1h-1zM1113 126h1v1h-1z" fill="#5f5f5f"/>
<rect x="1115.5" y="122.5" width="8" height="8" rx="1.5" fill="url(#boxg)" stroke="#8c8c8c"/>
<rect x="1117" y="126" width="5" height="1" fill="#3b5aa0"/>
<rect x="1078" y="135" width="4" height="4" fill="#000"/>
<rect x="1079" y="139" width="2" height="4" fill="#7a7a7a"/>
<rect x="1077" y="143" width="6" height="6" fill="#0000ff"/>
<path d="M1077.5 142.5 L1079.5 146.5 L1084.5 139" fill="none" stroke="#ff0000" stroke-width="2"/>
<path d="M1090 144h1v1h-1zM1092 144h1v1h-1zM1094 144h1v1h-1zM1096 144h1v1h-1zM1098 144h1v1h-1z" fill="#5f5f5f"/>
<rect x="1078" y="153" width="4" height="4" fill="#000"/>
<rect x="1079" y="157" width="2" height="4" fill="#7a7a7a"/>
<rect x="1077" y="161" width="6" height="6" fill="#0000ff"/>
<path d="M1077.5 160.5 L1079.5 164.5 L1084.5 157" fill="none" stroke="#ff0000" stroke-width="2"/>
<path d="M1090 162h1v1h-1zM1092 162h1v1h-1zM1094 162h1v1h-1zM1096 162h1v1h-1zM1098 162h1v1h-1z" fill="#5f5f5f"/>
<rect x="1078" y="171" width="4" height="4" fill="#000"/>
<rect x="1079" y="175" width="2" height="4" fill="#7a7a7a"/>
<rect x="1077" y="179" width="6" height="6" fill="#0000ff"/>
<path d="M1077.5 178.5 L1079.5 182.5 L1084.5 175" fill="none" stroke="#ff0000" stroke-width="2"/>
<path d="M1090 180h1v1h-1zM1092 180h1v1h-1zM1094 180h1v1h-1zM1096 180h1v1h-1zM1098 180h1v1h-1z" fill="#5f5f5f"/>
<rect x="1078" y="189" width="4" height="4" fill="#000"/>
<rect x="1079" y="193" width="2" height="4" fill="#7a7a7a"/>
<rect x="1077" y="197" width="6" height="6" fill="#0000ff"/>
<path d="M1077.5 196.5 L1079.5 200.5 L1084.5 193" fill="none" stroke="#ff0000" stroke-width="2"/>
<path d="M1090 198h1v1h-1zM1092 198h1v1h-1zM1094 198h1v1h-1zM1096 198h1v1h-1zM1098 198h1v1h-1z" fill="#5f5f5f"/>
<rect x="1078" y="207" width="4" height="4" fill="#000"/>
<rect x="1079" y="211" width="2" height="4" fill="#7a7a7a"/>
<rect x="1077" y="215" width="6" height="6" fill="#0000ff"/>
<path d="M1077.5 214.5 L1079.5 218.5 L1084.5 211" fill="none" stroke="#ff0000" stroke-width="2"/>
<path d="M1090 216h1v1h-1zM1092 216h1v1h-1zM1094 216h1v1h-1zM1096 216h1v1h-1zM1098 216h1v1h-1z" fill="#5f5f5f"/>
<rect x="1078" y="225" width="4" height="4" fill="#000"/>
<rect x="1079" y="229" width="2" height="4" fill="#7a7a7a"/>
<rect x="1077" y="233" width="6" height="6" fill="#0000ff"/>
<path d="M1077.5 232.5 L1079.5 236.5 L1084.5 229" fill="none" stroke="#ff0000" stroke-width="2"/>
<path d="M1090 234h1v1h-1zM1092 234h1v1h-1zM1094 234h1v1h-1zM1096 234h1v1h-1zM1098 234h1v1h-1z" fill="#5f5f5f"/>
<rect x="1078" y="243" width="4" height="4" fill="#000"/>
<rect x="1079" y="247" width="2" height="4" fill="#7a7a7a"/>
<rect x="1077" y="251" width="6" height="6" fill="#0000ff"/>
<path d="M1077.5 250.5 L1079.5 254.5 L1084.5 247" fill="none" stroke="#ff0000" stroke-width="2"/>
<path d="M1090 252h1v1h-1zM1092 252h1v1h-1zM1094 252h1v1h-1zM1096 252h1v1h-1zM1098 252h1v1h-1z" fill="#5f5f5f"/>
<rect x="1078" y="261" width="4" height="4" fill="#000"/>
<rect x="1079" y="265" width="2" height="4" fill="#7a7a7a"/>
<rect x="1077" y="269" width="6" height="6" fill="#0000ff"/>
<path d="M1077.5 268.5 L1079.5 272.5 L1084.5 265" fill="none" stroke="#ff0000" stroke-width="2"/>
<path d="M1090 270h1v1h-1zM1092 270h1v1h-1zM1094 270h1v1h-1zM1096 270h1v1h-1zM1098 270h1v1h-1z" fill="#5f5f5f"/>
<rect x="1078" y="279" width="4" height="4" fill="#000"/>
<rect x="1079" y="283" width="2" height="4" fill="#7a7a7a"/>
<rect x="1077" y="287" width="6" height="6" fill="#0000ff"/>
<path d="M1077.5 286.5 L1079.5 290.5 L1084.5 283" fill="none" stroke="#ff0000" stroke-width="2"/>
<path d="M1090 288h1v1h-1zM1092 288h1v1h-1zM1094 288h1v1h-1zM1096 288h1v1h-1zM1098 288h1v1h-1z" fill="#5f5f5f"/>
<rect x="1078" y="297" width="4" height="4" fill="#000"/>
<rect x="1079" y="301" width="2" height="4" fill="#7a7a7a"/>
<rect x="1077" y="305" width="6" height="6" fill="#0000ff"/>
<path d="M1077.5 304.5 L1079.5 308.5 L1084.5 301" fill="none" stroke="#ff0000" stroke-width="2"/>
<path d="M1090 306h1v1h-1zM1092 306h1v1h-1zM1094 306h1v1h-1zM1096 306h1v1h-1zM1098 306h1v1h-1z" fill="#5f5f5f"/>
<rect x="1078" y="315" width="4" height="4" fill="#000"/>
<rect x="1079" y="319" width="2" height="4" fill="#7a7a7a"/>
<rect x="1077" y="323" width="6" height="6" fill="#0000ff"/>
<path d="M1077.5 322.5 L1079.5 326.5 L1084.5 319" fill="none" stroke="#ff0000" stroke-width="2"/>
<path d="M1090 324h1v1h-1zM1092 324h1v1h-1zM1094 324h1v1h-1zM1096 324h1v1h-1zM1098 324h1v1h-1z" fill="#5f5f5f"/>
<rect x="1078" y="333" width="4" height="4" fill="#000"/>
<rect x="1079" y="337" width="2" height="4" fill="#7a7a7a"/>
<rect x="1077" y="341" width="6" height="6" fill="#0000ff"/>
<path d="M1077.5 340.5 L1079.5 344.5 L1084.5 337" fill="none" stroke="#ff0000" stroke-width="2"/>
<path d="M1090 342h1v1h-1zM1092 342h1v1h-1zM1094 342h1v1h-1zM1096 342h1v1h-1zM1098 342h1v1h-1z" fill="#5f5f5f"/>
<rect x="1078" y="351" width="4" height="4" fill="#000"/>
<rect x="1079" y="355" width="2" height="4" fill="#7a7a7a"/>
<rect x="1077" y="359" width="6" height="6" fill="#0000ff"/>
<path d="M1077.5 358.5 L1079.5 362.5 L1084.5 355" fill="none" stroke="#ff0000" stroke-width="2"/>
<path d="M1090 360h1v1h-1zM1092 360h1v1h-1zM1094 360h1v1h-1zM1096 360h1v1h-1zM1098 360h1v1h-1z" fill="#5f5f5f"/>
<rect x="1078" y="369" width="4" height="4" fill="#000"/>
<rect x="1079" y="373" width="2" height="4" fill="#7a7a7a"/>
<rect x="1077" y="377" width="6" height="6" fill="#0000ff"/>
<path d="M1077.5 376.5 L1079.5 380.5 L1084.5 373" fill="none" stroke="#ff0000" stroke-width="2"/>
<path d="M1090 378h1v1h-1zM1092 378h1v1h-1zM1094 378h1v1h-1zM1096 378h1v1h-1zM1098 378h1v1h-1z" fill="#5f5f5f"/>
<rect x="1078" y="387" width="4" height="4" fill="#000"/>
<rect x="1079" y="391" width="2" height="4" fill="#7a7a7a"/>
<rect x="1077" y="395" width="6" height="6" fill="#0000ff"/>
<path d="M1077.5 394.5 L1079.5 398.5 L1084.5 391" fill="none" stroke="#ff0000" stroke-width="2"/>
<path d="M1090 396h1v1h-1zM1092 396h1v1h-1zM1094 396h1v1h-1zM1096 396h1v1h-1zM1098 396h1v1h-1z" fill="#5f5f5f"/>
<rect x="1078" y="405" width="4" height="4" fill="#000"/>
<rect x="1079" y="409" width="2" height="4" fill="#7a7a7a"/>
<rect x="1077" y="413" width="6" height="6" fill="#0000ff"/>
<path d="M1077.5 412.5 L1079.5 416.5 L1084.5 409" fill="none" stroke="#ff0000" stroke-width="2"/>
<path d="M1090 414h1v1h-1zM1092 414h1v1h-1zM1094 414h1v1h-1zM1096 414h1v1h-1zM1098 414h1v1h-1z" fill="#5f5f5f"/>
<rect x="1097" y="423" width="4" height="4" fill="#000"/>
<rect x="1098" y="427" width="2" height="4" fill="#7a7a7a"/>
<rect x="1096" y="431" width="6" height="6" fill="#0000ff"/>
<path d="M1096.5 430.5 L1098.5 434.5 L1103.5 427" fill="none" stroke="#ff0000" stroke-width="2"/>
<path d="M1109 432h1v1h-1zM1111 432h1v1h-1zM1113 432h1v1h-1z" fill="#5f5f5f"/>
<rect x="1115.5" y="428.5" width="8" height="8" rx="1.5" fill="url(#boxg)" stroke="#8c8c8c"/>
<rect x="1117" y="432" width="5" height="1" fill="#3b5aa0"/>
<rect x="1119" y="430" width="1" height="5" fill="#3b5aa0"/>
<rect x="793" y="107" width="278" height="1" fill="#008000"/>
<rect x="793" y="143" width="61" height="1" fill="#008000"/>
<rect x="793" y="323" width="86" height="1" fill="#008000"/>
<rect x="793" y="341" width="99" height="1" fill="#008000"/>
<rect x="793" y="359" width="94" height="1" fill="#008000"/>
<rect x="0" y="452" width="1185" height="6" fill="#f0f0f0"/>
<rect x="0" y="451" width="1185" height="1" fill="#ffffff"/>
<rect x="1" y="80" width="16" height="372" fill="#efefef"/>
<rect x="8" y="80" width="1" height="372" fill="#eaeaea"/>
<path d="M6 91.5h8l-4 -4.5z" fill="#3a3a3a"/>
<path d="M6 440.5h8l-4 4.5z" fill="#3a3a3a"/>
<rect x="2.5" y="98.5" width="14" height="256" rx="2" fill="url(#thumbv)" stroke="#979797"/>
<rect x="6" y="223" width="7" height="1" fill="#404040"/>
<rect x="6" y="226" width="7" height="1" fill="#404040"/>
<rect x="6" y="229" width="7" height="1" fill="#404040"/>
<rect x="1" y="80" width="1" height="372" fill="#ffffff"/>
<rect x="1169" y="80" width="16" height="355" fill="#efefef"/>
<rect x="1176" y="80" width="1" height="355" fill="#eaeaea"/>
<path d="M1174 91.5h8l-4 -4.5z" fill="#3a3a3a"/>
<path d="M1174 423.5h8l-4 4.5z" fill="#3a3a3a"/>
<rect x="1170.5" y="98.5" width="14" height="116" rx="2" fill="url(#thumbv)" stroke="#979797"/>
<rect x="1174" y="153" width="7" height="1" fill="#404040"/>
<rect x="1174" y="156" width="7" height="1" fill="#404040"/>
<rect x="1174" y="159" width="7" height="1" fill="#404040"/>
<rect x="793" y="435" width="376" height="16" fill="#efefef"/>
<path d="M803.5 439v8l-4.5 -4z" fill="#3a3a3a"/>
<path d="M1157.5 439v8l4.5 -4z" fill="#3a3a3a"/>
<rect x="811.5" y="435.5" width="337" height="15" rx="2" fill="url(#thumbh)" stroke="#979797"/>
<rect x="976" y="439" width="1" height="7" fill="#404040"/>
<rect x="979" y="439" width="1" height="7" fill="#404040"/>
<rect x="982" y="439" width="1" height="7" fill="#404040"/>
<rect x="1169" y="435" width="16" height="16" fill="#f0f0f0"/>
<rect x="1168" y="459" width="16" height="250" fill="#efefef"/>
<rect x="1175" y="459" width="1" height="250" fill="#eaeaea"/>
<path d="M1173 470.5h8l-4 -4.5z" fill="#3a3a3a"/>
<path d="M1173 697.5h8l-4 4.5z" fill="#3a3a3a"/>
<rect x="1169.5" y="477.5" width="14" height="45" rx="2" fill="url(#thumbv)" stroke="#979797"/>
<rect x="1173" y="496" width="7" height="1" fill="#404040"/>
<rect x="1173" y="499" width="7" height="1" fill="#404040"/>
<rect x="1173" y="502" width="7" height="1" fill="#404040"/>
<rect x="0" y="709" width="1168" height="16" fill="#efefef"/>
<path d="M10.5 713v8l-4.5 -4z" fill="#a8a8a8"/>
<path d="M1156.5 713v8l4.5 -4z" fill="#a8a8a8"/>
<rect x="1168" y="709" width="16" height="16" fill="#f0f0f0"/>
<path d="M1173 454.5h9l-4.5 4.5z" fill="#fff" stroke="#000"/>
<rect x="25" y="471" width="1" height="238" fill="#000"/>
<rect x="21.5" y="463.5" width="8" height="8" fill="#fff" stroke="#000" stroke-width="1.2"/>
<rect x="23" y="467" width="5" height="1" fill="#000"/>
<rect x="21.5" y="480.5" width="8" height="8" fill="#fff" stroke="#000" stroke-width="1.2"/>
<rect x="23" y="484" width="5" height="1" fill="#000"/>
<rect x="21.5" y="531.5" width="8" height="8" fill="#fff" stroke="#000" stroke-width="1.2"/>
<rect x="23" y="535" width="5" height="1" fill="#000"/>
<rect x="21.5" y="548.5" width="8" height="8" fill="#fff" stroke="#000" stroke-width="1.2"/>
<rect x="23" y="552" width="5" height="1" fill="#000"/>
<rect x="21.5" y="565.5" width="8" height="8" fill="#fff" stroke="#000" stroke-width="1.2"/>
<rect x="23" y="569" width="5" height="1" fill="#000"/>
<rect x="21.5" y="633.5" width="8" height="8" fill="#fff" stroke="#000" stroke-width="1.2"/>
<rect x="23" y="637" width="5" height="1" fill="#000"/>
<rect x="21.5" y="650.5" width="8" height="8" fill="#fff" stroke="#000" stroke-width="1.2"/>
<rect x="23" y="654" width="5" height="1" fill="#000"/>
<rect x="26" y="518" width="3" height="1" fill="#000"/>
<rect x="26" y="603" width="3" height="1" fill="#000"/>
<rect x="26" y="620" width="3" height="1" fill="#000"/>
<rect x="26" y="688" width="3" height="1" fill="#000"/>
<rect x="26" y="705" width="3" height="1" fill="#000"/>
<path d="M1 725.5 L88 725.5" stroke="#000"/><path d="M1.5 726 L6.5 741 M89 726 L87.5 741 M89 726 L93.5 741" stroke="#000" stroke-width="1"/><path d="M143 726 L138.5 741 M143 726 L144.5 741" stroke="#000"/><path d="M142 725.5 L1185 725.5" stroke="#000"/><path d="M179.5 726 L174.5 741" stroke="#000"/>
</svg>
</body></html>
